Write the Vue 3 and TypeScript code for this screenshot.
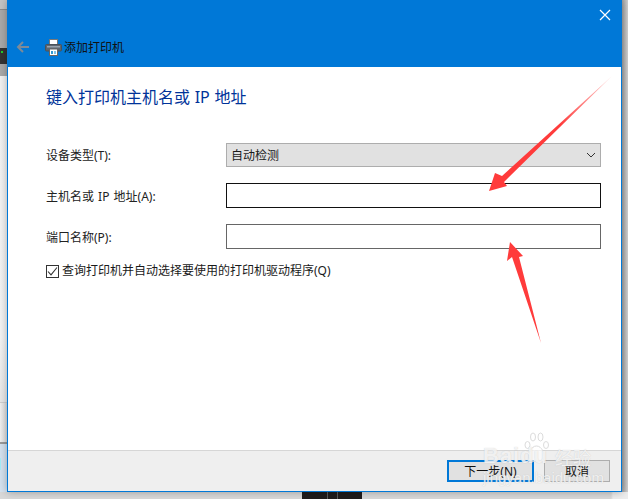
<script setup lang="ts">
const title = '添加打印机'
const heading = '键入打印机主机名或 IP 地址'
</script>

<template>
  <div class="desktop">
    <div class="bg-left">
      <div class="bg-top"></div>
      <div class="bg-device"><i></i><b></b></div>
      <div class="bg-panel"></div>
      <div class="bg-bar"></div>
      <div class="bg-blue"><i></i></div>
    </div>
    <div class="bg-right"></div>
    <div class="bg-bottom"><div class="bg-dark"><i></i><i></i></div></div>

    <div class="window">
      <header class="titlebar">
        <svg class="close" width="12" height="12" viewBox="0 0 12 12">
          <path d="M1 1 L11 11 M11 1 L1 11" stroke="#fff" stroke-width="1.2" fill="none" />
        </svg>
        <div class="nav">
          <svg class="back" width="14" height="14" viewBox="0 0 14 14">
            <path d="M13 7 H2 M7 2 L2 7 L7 12" stroke="#7d8a97" stroke-width="2" fill="none" />
          </svg>
          <svg class="printer" width="17" height="17" viewBox="0 0 17 17">
            <rect x="4.5" y="0.5" width="8" height="6" fill="#fff" stroke="#777" />
            <rect x="0.5" y="5.5" width="16" height="6.5" rx="1" fill="#5d6670" stroke="#4a525a" />
            <rect x="2" y="7" width="13" height="1.5" fill="#9aa3ad" />
            <rect x="4.5" y="10" width="8" height="6.5" fill="#fff" stroke="#666" />
            <rect x="6" y="12" width="2" height="3" fill="#2e9ad6" />
            <rect x="9" y="12" width="2" height="3" fill="#7fc4e8" />
          </svg>
          <span class="title">{{ title }}</span>
        </div>
      </header>

      <main class="content">
        <h1 class="heading">{{ heading }}</h1>
        <div class="form">
          <label class="label">设备类型(T):</label>
          <div class="select">
            <span>自动检测</span>
            <svg width="10" height="6" viewBox="0 0 10 6">
              <path d="M1 1 L5 5 L9 1" stroke="#333" stroke-width="1" fill="none" />
            </svg>
          </div>
          <label class="label">主机名或 IP 地址(A):</label>
          <div class="input focus"></div>
          <label class="label">端口名称(P):</label>
          <div class="input"></div>
        </div>
        <div class="check">
          <span class="box">
            <svg width="11" height="11" viewBox="0 0 11 11">
              <path d="M1 5.5 L4 8.8 L10 1.5" stroke="#333" stroke-width="1.1" fill="none" />
            </svg>
          </span>
          <span>查询打印机并自动选择要使用的打印机驱动程序(Q)</span>
        </div>
      </main>

      <footer class="footer">
        <button class="btn primary">下一步(N)</button>
        <button class="btn">取消</button>
      </footer>
    </div>

    <svg class="arrows" width="628" height="499" viewBox="0 0 628 499">
      <defs>
        <linearGradient id="fade" x1="612" y1="76" x2="560" y2="125" gradientUnits="userSpaceOnUse">
          <stop offset="0" stop-color="#ff3b3b" stop-opacity="0.2" />
          <stop offset="1" stop-color="#ff3b3b" />
        </linearGradient>
      </defs>
      <polygon points="612,76 502,176 495,173 489,191 507,186 504,182" fill="url(#fade)" />
      <polygon points="510,242 507,261 512,257 541,343 519,257 523,256" fill="#ff3b3b" />
    </svg>

    <div class="watermark">
      <svg class="paw" width="26" height="33" viewBox="0 0 26 33">
        <g fill="#fff" fill-opacity="0.6" stroke="#dcdcdc" stroke-width="1">
          <ellipse cx="3.5" cy="13" rx="2.5" ry="3.5" />
          <ellipse cx="9" cy="5" rx="2.5" ry="4" />
          <ellipse cx="16.5" cy="5" rx="2.5" ry="4" />
          <ellipse cx="22" cy="13" rx="2.5" ry="3.5" />
          <path d="M12.5 14 C7 14 4 22 5 26 C7 31 10 29 12.5 29 C15 29 19 31 20 26 C21 22 18 14 12.5 14 Z" />
        </g>
      </svg>
      <span class="wm-logo">Bai</span>
      <span class="wm-du">du</span>
      <span class="wm-cn">经验</span>
      <span class="wm-url">jingyan.baidu.com</span>
    </div>
  </div>
</template>

<style>
html, body { margin: 0; padding: 0; }
</style>

<style scoped>
.desktop {
  position: relative;
  width: 628px;
  height: 499px;
  overflow: hidden;
  background: #d9d9d9;
  font-family: "Noto Sans", "Noto Sans CJK SC", sans-serif;
  font-size: 12px;
  color: #1a1a1a;
}
.bg-left {
  position: absolute;
  left: 0;
  top: 0;
  width: 8px;
  height: 499px;
  display: flex;
  flex-direction: column;
}
.bg-top {
  height: 10px;
  background: #c4c4c4;
  border-bottom: 1px solid #8c8c8c;
  box-sizing: border-box;
}
.bg-device {
  position: relative;
  height: 66px;
  background: #a9a9a9;
}
.bg-device i {
  position: absolute;
  left: 0;
  top: 38px;
  width: 7px;
  height: 16px;
  background: #333;
}
.bg-device b {
  position: absolute;
  left: 1px;
  top: 41px;
  width: 2px;
  height: 2px;
  background: #22d32a;
}
.bg-panel {
  height: 326px;
  background: linear-gradient(#f2f2f2, #f4f4f4 80%, #e8e8e8);
}
.bg-bar {
  height: 42px;
  background: linear-gradient(90deg, #f0f0f0, #d8d8d8);
  border-top: 1px solid #cfcfcf;
  border-bottom: 2px solid #9a9a9a;
  box-sizing: border-box;
}
.bg-blue {
  position: relative;
  flex: 1;
  background: #d5e2ef;
}
.bg-blue i {
  position: absolute;
  left: 0;
  top: 14px;
  width: 1px;
  height: 12px;
  background: #a6eef8;
}
.bg-right {
  position: absolute;
  right: 0;
  top: 0;
  width: 7px;
  height: 499px;
  background: linear-gradient(90deg, #9a9a9a, #d0d0d0);
}
.bg-bottom {
  position: absolute;
  left: 0;
  right: 0;
  bottom: 0;
  height: 7px;
  background: linear-gradient(90deg, #d8d8d8 0, #d8d8d8 611px, #ededed 613px);
}
.bg-dark {
  position: absolute;
  left: 302px;
  top: 0;
  width: 60px;
  height: 7px;
  background: #1f1c1c;
}
.bg-dark i {
  position: absolute;
  top: 0;
  width: 1px;
  height: 7px;
  background: #5a5a5a;
  left: 25px;
}
.bg-dark i + i {
  left: 35px;
}
.window {
  position: absolute;
  left: 7px;
  top: 0;
  width: 615px;
  height: 492px;
  box-sizing: border-box;
  border: 1px solid #0078d7;
  border-top: 0;
  background: #fff;
  display: flex;
  flex-direction: column;
  box-shadow: 0 0 8px rgba(0, 0, 0, 0.3);
}
.titlebar {
  position: relative;
  height: 67px;
  flex: none;
  background: #0078d7;
  display: flex;
  align-items: flex-end;
}
.close {
  position: absolute;
  right: 10px;
  top: 9px;
}
.nav {
  display: flex;
  align-items: center;
  height: 40px;
  padding-left: 8px;
}
.back {
  margin-right: 15px;
}
.printer {
  margin-right: 2px;
}
.title {
  color: #111;
  font-size: 12px;
  line-height: 16px;
  padding-top: 2px;
}
.content {
  flex: 1;
  padding: 0 19px 0 38px;
  min-height: 0;
}
.heading {
  margin: 20px 0 0;
  font-size: 16px;
  font-weight: 400;
  line-height: 20px;
  color: #003399;
  word-spacing: 0.5px;
}
.form {
  margin-top: 36px;
  display: grid;
  grid-template-columns: 180px 375px;
  grid-template-rows: 24px 25px 25px;
  row-gap: 16px;
  align-items: center;
}
.label {
  line-height: 16px;
  color: #222;
  padding-top: 2px;
  word-spacing: 1px;
}
.select {
  height: 24px;
  box-sizing: border-box;
  border: 1px solid #adadad;
  background: #e1e1e1;
  display: flex;
  align-items: center;
  justify-content: space-between;
  padding: 0 4px;
}
.input {
  height: 25px;
  box-sizing: border-box;
  border: 1px solid #666;
  background: #fff;
}
.input.focus {
  border-color: #111;
}
.check {
  margin-top: 14px;
  display: flex;
  align-items: center;
  gap: 3px;
  line-height: 16px;
}
.box {
  width: 13px;
  height: 13px;
  box-sizing: border-box;
  border: 1px solid #333;
  display: flex;
  align-items: center;
  justify-content: center;
}
.footer {
  flex: none;
  height: 41px;
  box-sizing: border-box;
  background: #efefef;
  border-top: 1px solid #d6d6d6;
  display: flex;
  justify-content: flex-end;
  align-items: flex-start;
  gap: 10px;
  padding: 9px 11px 0 0;
}
.btn {
  height: 22px;
  width: 66px;
  box-sizing: border-box;
  border: 1px solid #adadad;
  background: #e1e1e1;
  font: inherit;
  color: #111;
  padding: 0;
}
.btn.primary {
  width: 87px;
  border: 2px solid #0078d7;
}
.arrows {
  position: absolute;
  left: 0;
  top: 0;
  pointer-events: none;
}
.watermark {
  position: absolute;
  left: 480px;
  top: 430px;
  width: 118px;
  height: 58px;
  color: rgba(255, 255, 255, 0.75);
  text-shadow: 0 0 1px rgba(170, 170, 170, 0.6);
  font-family: "Liberation Sans", sans-serif;
  pointer-events: none;
}
.paw {
  position: absolute;
  left: 44px;
  top: 2px;
}
.wm-logo, .wm-du {
  position: absolute;
  top: 14px;
  font-size: 22px;
  font-weight: 700;
  line-height: 24px;
}
.wm-logo { left: 3px; letter-spacing: 1px; }
.wm-du { left: 40px; }
.wm-cn {
  position: absolute;
  left: 75px;
  top: 17px;
  font-size: 18px;
  line-height: 20px;
  font-family: "Noto Sans CJK SC", sans-serif;
}
.wm-url {
  position: absolute;
  left: 3px;
  top: 39px;
  font-size: 15px;
  line-height: 18px;
}
</style>
